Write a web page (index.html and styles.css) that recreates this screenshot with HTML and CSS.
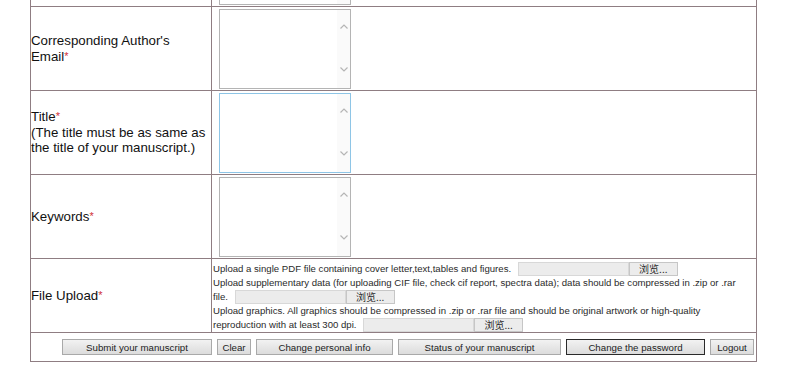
FILE: index.html
```html
<!DOCTYPE html>
<html>
  <head>
    <link rel="stylesheet" href="styles.css">
  </head>
  <body>
    <table class="form">
      <colgroup>
        <col class="c1">
        <col class="c2">
      </colgroup>
      <tr>
        <td class="label"></td>
        <td class="field">
          <div class="ta">
            <textarea></textarea>
            <div class="sb">
              <svg width="8" height="5" viewBox="0 0 8 5"><path d="M0.5 4.5 L4 1 L7.5 4.5" fill="none" stroke="#b5b5b5" stroke-width="1.2"/></svg>
              <svg width="8" height="5" viewBox="0 0 8 5"><path d="M0.5 0.5 L4 4 L7.5 0.5" fill="none" stroke="#b5b5b5" stroke-width="1.2"/></svg>
            </div>
          </div>
        </td>
      </tr>
      <tr>
        <td class="label">Corresponding Author's<br>Email<span class="req">*</span></td>
        <td class="field">
          <div class="ta">
            <textarea></textarea>
            <div class="sb">
              <svg width="8" height="5" viewBox="0 0 8 5"><path d="M0.5 4.5 L4 1 L7.5 4.5" fill="none" stroke="#b5b5b5" stroke-width="1.2"/></svg>
              <svg width="8" height="5" viewBox="0 0 8 5"><path d="M0.5 0.5 L4 4 L7.5 0.5" fill="none" stroke="#b5b5b5" stroke-width="1.2"/></svg>
            </div>
          </div>
        </td>
      </tr>
      <tr>
        <td class="label">Title<span class="req">*</span><br>(The title must be as same as the title of your manuscript.)</td>
        <td class="field">
          <div class="ta hover">
            <textarea></textarea>
            <div class="sb">
              <svg width="8" height="5" viewBox="0 0 8 5"><path d="M0.5 4.5 L4 1 L7.5 4.5" fill="none" stroke="#b5b5b5" stroke-width="1.2"/></svg>
              <svg width="8" height="5" viewBox="0 0 8 5"><path d="M0.5 0.5 L4 4 L7.5 0.5" fill="none" stroke="#b5b5b5" stroke-width="1.2"/></svg>
            </div>
          </div>
        </td>
      </tr>
      <tr>
        <td class="label">Keywords<span class="req">*</span></td>
        <td class="field">
          <div class="ta">
            <textarea></textarea>
            <div class="sb">
              <svg width="8" height="5" viewBox="0 0 8 5"><path d="M0.5 4.5 L4 1 L7.5 4.5" fill="none" stroke="#b5b5b5" stroke-width="1.2"/></svg>
              <svg width="8" height="5" viewBox="0 0 8 5"><path d="M0.5 0.5 L4 4 L7.5 0.5" fill="none" stroke="#b5b5b5" stroke-width="1.2"/></svg>
            </div>
          </div>
        </td>
      </tr>
      <tr>
        <td class="label">File Upload<span class="req">*</span></td>
        <td class="upload">
          Upload a single PDF file containing cover letter,text,tables and figures.
          <span class="file"><span class="fname"></span><span class="fbtn">浏览...</span></span><br>
          Upload supplementary data (for uploading CIF file, check cif report, spectra data); data should be compressed in .zip or .rar file.
          <span class="file"><span class="fname"></span><span class="fbtn">浏览...</span></span><br>
          Upload graphics. All graphics should be compressed in .zip or .rar file and should be original artwork or high-quality reproduction with at least 300 dpi.
          <span class="file"><span class="fname"></span><span class="fbtn">浏览...</span></span>
        </td>
      </tr>
      <tr>
        <td colspan="2" class="actions">
          <div class="btns">
            <button class="b-submit">Submit your manuscript</button>
            <button class="b-clear">Clear</button>
            <button class="b-info">Change personal info</button>
            <button class="b-status">Status of your manuscript</button>
            <button class="b-pw focus">Change the password</button>
            <button class="b-logout">Logout</button>
          </div>
        </td>
      </tr>
    </table>
  </body>
</html>
```

FILE: styles.css
```css
body {
  margin: 0;
  background-color: #fff;
  font-family: "Liberation Sans", Arial, sans-serif;
  color: #111;
}

.form {
  border-collapse: collapse;
  width: 727px;
  margin: -78px 0 0 30px;
}

.c1 {
  width: 181px;
}

.form td {
  border: 1px solid #8f7d82;
}

.label {
  font-size: 13.3px;
  line-height: 15.5px;
  padding: 0 2px 0 0;
  vertical-align: middle;
}

.req {
  color: #d0303a;
  font-size: 11px;
  vertical-align: top;
}

.field {
  padding: 2px 0 1px 7px;
}

.ta {
  display: flex;
  width: 130px;
  height: 78px;
  border: 1px solid #b4b4b4;
  background-color: #fff;
}

.ta.hover {
  border-color: #8ec5e6;
}

.ta textarea {
  flex: 1;
  border: none;
  outline: none;
  resize: none;
  padding: 0;
  margin: 0;
  background: transparent;
}

.sb {
  width: 13px;
  display: flex;
  flex-direction: column;
  align-items: center;
  justify-content: space-between;
  padding: 14px 0 16px;
  background-color: #fafafa;
}

.upload {
  font-size: 9.6px;
  line-height: 13.5px;
  padding: 3px 12px 0 1px;
  color: #2a2a2a;
}

.file {
  display: inline-flex;
  vertical-align: middle;
  margin-left: 4px;
}

.fname {
  width: 109px;
  height: 12px;
  border: 1px solid #d8d8d8;
  background-color: #ececec;
}

.fbtn {
  width: 47px;
  height: 12px;
  line-height: 12px;
  border: 1px solid #c6c6c6;
  background-color: #ececec;
  text-align: center;
  font-size: 10px;
  font-family: "Noto Sans CJK SC", sans-serif;
}

.actions {
  padding: 6px 2px 6px 0;
}

.btns {
  display: flex;
  justify-content: flex-end;
  gap: 5px;
}

button {
  height: 16px;
  padding: 0;
  font-family: "Liberation Sans", Arial, sans-serif;
  font-size: 9.7px;
  color: #222;
  border: 1px solid #a9a9a9;
  background: linear-gradient(#f2f2f2, #dcdcdc);
}

button.focus {
  border-color: #2a2a2a;
}

.b-submit {
  width: 150px;
}

.b-clear {
  width: 34px;
}

.b-info {
  width: 137px;
}

.b-status {
  width: 163px;
}

.b-pw {
  width: 139px;
}

.b-logout {
  width: 44px;
}
```
